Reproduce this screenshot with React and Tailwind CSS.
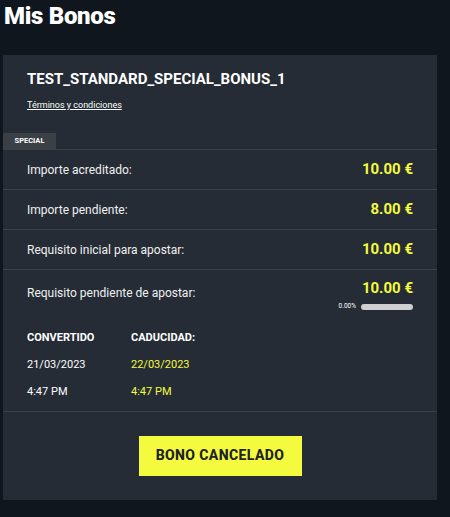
import React from 'react';

const rows = [
  { label: 'Importe acreditado:', value: '10.00 €' },
  { label: 'Importe pendiente:', value: '8.00 €' },
  { label: 'Requisito inicial para apostar:', value: '10.00 €' },
];

export default function App() {
  return (
    <div
      className="min-h-screen bg-[#0f161e] text-white pl-[3px]"
      style={{ fontFamily: 'Roboto, "Liberation Sans", sans-serif' }}
    >
      <h1 className="h-[55px] pl-[1px] pt-[1px] text-[24px] font-black leading-[30px] tracking-[-0.3px]">
        Mis Bonos
      </h1>

      <div className="w-[434px] bg-[#252c35]">
        <div className="h-[78px] px-6 pt-[14px]">
          <div className="text-[15px] font-bold leading-[20px]">TEST_STANDARD_SPECIAL_BONUS_1</div>
          <a href="#" className="mt-[10px] block text-[9px] leading-[12px] underline">
            Términos y condiciones
          </a>
        </div>

        <div className="flex h-[16px] w-[53px] items-center justify-center bg-[#3a4046] text-[7.5px] font-bold">
          SPECIAL
        </div>

        {rows.map((row) => (
          <div
            key={row.label}
            className="flex h-[40px] items-center justify-between border-t border-[#3b4149] pl-6 pr-6"
          >
            <span className="text-[12px] text-[#f0f0f0]">{row.label}</span>
            <span className="text-[15px] font-bold text-[#f4fb3f]">{row.value}</span>
          </div>
        ))}

        <div className="border-t border-[#3b4149] px-6 pt-[8px] pb-[12px]">
          <div className="flex items-start justify-between">
            <span className="mt-[6px] text-[12px] text-[#f0f0f0]">Requisito pendiente de apostar:</span>
            <div className="flex flex-col items-end">
              <span className="text-[15px] font-bold leading-[20px] text-[#f4fb3f]">10.00 €</span>
              <div className="mt-[4px] flex items-center gap-[5px]">
                <span className="text-[6.5px]">0.00%</span>
                <div className="h-[6px] w-[52px] rounded-full bg-[#cfcfcf]" />
              </div>
            </div>
          </div>

          <div className="mt-[19px] flex text-[11px]">
            <div className="w-[104px]">
              <div className="font-bold leading-[14px]">CONVERTIDO</div>
              <div className="mt-[13px] leading-[14px]">21/03/2023</div>
              <div className="mt-[13px] leading-[14px]">4:47 PM</div>
            </div>
            <div>
              <div className="font-bold leading-[14px]">CADUCIDAD:</div>
              <div className="mt-[13px] leading-[14px] text-[#f4fb3f]">22/03/2023</div>
              <div className="mt-[13px] leading-[14px] text-[#f4fb3f]">4:47 PM</div>
            </div>
          </div>
        </div>

        <div className="flex h-[89px] items-start justify-center border-t border-[#3b4149] pt-[24px]">
          <button className="h-[40px] w-[163px] bg-[#f4fb3f] text-[14px] font-extrabold tracking-[0.4px] text-[#1e2227]">
            BONO CANCELADO
          </button>
        </div>
      </div>
    </div>
  );
}
